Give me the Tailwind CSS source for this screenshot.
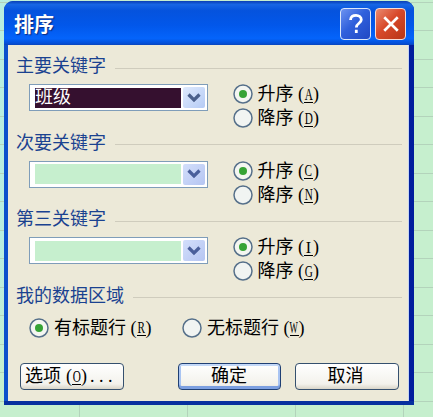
<!DOCTYPE html>
<html lang="zh-CN">
<head>
    <meta charset="UTF-8">
    <meta name="viewport" content="width=device-width, initial-scale=1.0">
    <title>排序</title>
    <script src="https://cdn.jsdelivr.net/npm/@tailwindcss/browser@4"></script>
</head>
<body class="w-[433px] h-[417px] overflow-hidden bg-[#c6efce] font-['Liberation_Serif','Noto_Sans_CJK_SC',sans-serif] text-[18px] text-black">

    <!-- Spreadsheet cells behind the dialog -->
    <div class="relative w-[433px] h-[417px] overflow-hidden pl-[4px] pt-[1px] bg-[linear-gradient(to_bottom,#c6efce00_60%,#c6efce_90%),linear-gradient(to_right,#b8eee0_0px,#c6efce_60px)]">
        <svg class="absolute inset-0" width="433" height="417" stroke="#b3d3bb" stroke-width="1" fill="none">
            <path d="M0 2.5H433M0 30.5H433M0 59.5H433M0 87.5H433M0 116.5H433M0 144.5H433M0 173.5H433M0 201.5H433M0 230.5H433M0 258.5H433M0 287.5H433M0 315.5H433M0 344.5H433M0 372.5H433M0 401.5H433"/>
            <path d="M79.5 400V417M187.5 400V417M295.5 400V417M403.5 400V417"/>
        </svg>

        <!-- Dialog -->
        <div class="relative w-[410px] h-[404px] rounded-t-[9px] overflow-hidden border-b-[4px] border-[#06309f] bg-[linear-gradient(to_right,#0b50cc,#0b4fd0_50%,#001d9c)] flex flex-col">
            <div class="h-[44px] shrink-0 flex items-center pl-[10px] pr-[8px] pt-[3px] bg-[linear-gradient(to_bottom,#0a3fb5_0%,#1766e4_8%,#0553dd_22%,#0257ea_55%,#0464fb_85%,#0350d8_96%,#0a45bb_100%)]">
                <h1 class="flex-1 text-[20px] leading-[24px] font-bold text-white [text-shadow:1px_1px_1px_#0a2a80]">排序</h1>
                <div class="flex gap-[4px] pb-px">
                    <button class="w-[31px] h-[32px] rounded-[4px] border-[1.5px] border-[#dce8fb] bg-[linear-gradient(135deg,#6d93f0,#3060dc_45%,#2148c4)] flex items-center justify-center">
                        <svg width="20" height="24" viewBox="0 0 20 24" fill="none" stroke="#fff" stroke-width="2.8"><path d="M4.5 8C4.5 4.5 7 3.3 10 3.3S15.3 5 15.3 7.8C15.3 11.3 10.3 11.3 10.3 15.5M10.3 17.8V21"/></svg>
                    </button>
                    <button class="w-[31px] h-[32px] rounded-[4px] border-[1.5px] border-[#f6ddd6] bg-[linear-gradient(135deg,#e98a70,#d8492a_45%,#b83616)] flex items-center justify-center">
                        <svg width="18" height="18" viewBox="0 0 20 20" fill="none" stroke="#fff" stroke-width="3"><path d="M2.5 2.5L17.5 17.5M17.5 2.5L2.5 17.5"/></svg>
                    </button>
                </div>
            </div>

            <div class="ml-[4px] mr-[5px] h-[356px] bg-[#ece9d8] border-r border-[#c5d4f2] pt-[9px]">

                <!-- Primary key -->
                <section class="h-[76.5px]">
                    <div class="flex items-center h-[22px] pl-[8px] pr-[6px]">
                        <h2 class="w-[99px] pt-[2px] leading-[22px] text-[#1a4290] whitespace-nowrap">主要关键字</h2>
                        <hr class="flex-1 mt-[6px] border-0 h-px bg-[#cfccbd]">
                    </div>
                    <div class="flex pt-[6px] pl-[21px]">
                        <div class="mt-[2px] w-[179px] h-[27px] border border-[#7f9db9] bg-white flex items-center pl-[5px] pr-[2px] gap-[2px]">
                            <div class="w-[146px] h-[20px] bg-[#35102f] text-white leading-[19px] overflow-hidden">班级</div>
                            <div class="w-[22px] h-[21px] rounded-[2px] bg-[linear-gradient(135deg,#dfeafd,#b5cbf5)] flex items-center justify-center">
                                <svg width="14" height="10" viewBox="0 0 14 10" fill="none" stroke="#4a5f8b" stroke-width="3.2"><path d="M1.5 1.5L7 7L12.5 1.5"/></svg>
                            </div>
                        </div>
                        <div class="ml-[25px]">
                            <label class="flex items-center h-[24px]">
                                <svg width="20" height="20" viewBox="0 0 20 20"><circle cx="10" cy="10" r="9" fill="#f4f6f1" stroke="#56708a" stroke-width="1.5"/><circle cx="10" cy="10" r="4" fill="#36a335"/></svg>
                                <span class="ml-[4.5px] leading-[24px]">升序</span>
                                <span class="ml-[4.5px] inline-flex items-center leading-[24px]">(<span class="w-[9px] h-[17px] flex justify-center text-[16px] leading-[17px] border-b border-black"><span class="scale-x-[0.7]">A</span></span>)</span>
                            </label>
                            <label class="flex items-center h-[24px]">
                                <svg width="20" height="20" viewBox="0 0 20 20"><circle cx="10" cy="10" r="9" fill="#f1f4f2" stroke="#56708a" stroke-width="1.5"/></svg>
                                <span class="ml-[4.5px] leading-[24px]">降序</span>
                                <span class="ml-[4.5px] inline-flex items-center leading-[24px]">(<span class="w-[9px] h-[17px] flex justify-center text-[16px] leading-[17px] border-b border-black"><span class="scale-x-[0.7]">D</span></span>)</span>
                            </label>
                        </div>
                    </div>
                </section>

                <!-- Secondary key -->
                <section class="h-[76.5px]">
                    <div class="flex items-center h-[22px] pl-[8px] pr-[6px]">
                        <h2 class="w-[99px] pt-[2px] leading-[22px] text-[#1a4290] whitespace-nowrap">次要关键字</h2>
                        <hr class="flex-1 mt-[6px] border-0 h-px bg-[#cfccbd]">
                    </div>
                    <div class="flex pt-[6px] pl-[21px]">
                        <div class="mt-[2px] w-[179px] h-[27px] border border-[#7f9db9] bg-white flex items-center pl-[5px] pr-[2px] gap-[2px]">
                            <div class="w-[146px] h-[20px] bg-[#c6efce]"></div>
                            <div class="w-[22px] h-[21px] rounded-[2px] bg-[linear-gradient(135deg,#d3dffb,#b5c5f2)] flex items-center justify-center">
                                <svg width="14" height="10" viewBox="0 0 14 10" fill="none" stroke="#4a5f9b" stroke-width="3.2"><path d="M1.5 1.5L7 7L12.5 1.5"/></svg>
                            </div>
                        </div>
                        <div class="ml-[25px]">
                            <label class="flex items-center h-[24px]">
                                <svg width="20" height="20" viewBox="0 0 20 20"><circle cx="10" cy="10" r="9" fill="#f4f6f1" stroke="#56708a" stroke-width="1.5"/><circle cx="10" cy="10" r="4" fill="#36a335"/></svg>
                                <span class="ml-[4.5px] leading-[24px]">升序</span>
                                <span class="ml-[4.5px] inline-flex items-center leading-[24px]">(<span class="w-[9px] h-[17px] flex justify-center text-[16px] leading-[17px] border-b border-black"><span class="scale-x-[0.7]">C</span></span>)</span>
                            </label>
                            <label class="flex items-center h-[24px]">
                                <svg width="20" height="20" viewBox="0 0 20 20"><circle cx="10" cy="10" r="9" fill="#f1f4f2" stroke="#56708a" stroke-width="1.5"/></svg>
                                <span class="ml-[4.5px] leading-[24px]">降序</span>
                                <span class="ml-[4.5px] inline-flex items-center leading-[24px]">(<span class="w-[9px] h-[17px] flex justify-center text-[16px] leading-[17px] border-b border-black"><span class="scale-x-[0.7]">N</span></span>)</span>
                            </label>
                        </div>
                    </div>
                </section>

                <!-- Third key -->
                <section class="h-[76.5px]">
                    <div class="flex items-center h-[22px] pl-[8px] pr-[6px]">
                        <h2 class="w-[99px] pt-[2px] leading-[22px] text-[#1a4290] whitespace-nowrap">第三关键字</h2>
                        <hr class="flex-1 mt-[6px] border-0 h-px bg-[#cfccbd]">
                    </div>
                    <div class="flex pt-[6px] pl-[21px]">
                        <div class="mt-[2px] w-[179px] h-[27px] border border-[#7f9db9] bg-white flex items-center pl-[5px] pr-[2px] gap-[2px]">
                            <div class="w-[146px] h-[20px] bg-[#c6efce]"></div>
                            <div class="w-[22px] h-[21px] rounded-[2px] bg-[linear-gradient(135deg,#d3dffb,#b5c5f2)] flex items-center justify-center">
                                <svg width="14" height="10" viewBox="0 0 14 10" fill="none" stroke="#4a5f9b" stroke-width="3.2"><path d="M1.5 1.5L7 7L12.5 1.5"/></svg>
                            </div>
                        </div>
                        <div class="ml-[25px]">
                            <label class="flex items-center h-[24px]">
                                <svg width="20" height="20" viewBox="0 0 20 20"><circle cx="10" cy="10" r="9" fill="#f4f6f1" stroke="#56708a" stroke-width="1.5"/><circle cx="10" cy="10" r="4" fill="#36a335"/></svg>
                                <span class="ml-[4.5px] leading-[24px]">升序</span>
                                <span class="ml-[4.5px] inline-flex items-center leading-[24px]">(<span class="w-[9px] h-[17px] flex justify-center text-[16px] leading-[17px] border-b border-black"><span>I</span></span>)</span>
                            </label>
                            <label class="flex items-center h-[24px]">
                                <svg width="20" height="20" viewBox="0 0 20 20"><circle cx="10" cy="10" r="9" fill="#f1f4f2" stroke="#56708a" stroke-width="1.5"/></svg>
                                <span class="ml-[4.5px] leading-[24px]">降序</span>
                                <span class="ml-[4.5px] inline-flex items-center leading-[24px]">(<span class="w-[9px] h-[17px] flex justify-center text-[16px] leading-[17px] border-b border-black"><span class="scale-x-[0.7]">G</span></span>)</span>
                            </label>
                        </div>
                    </div>
                </section>

                <!-- Data range -->
                <section class="h-[79.5px]">
                    <div class="flex items-center h-[22px] pl-[8px] pr-[6px]">
                        <h2 class="w-[117px] pt-[2px] leading-[22px] text-[#1a4290] whitespace-nowrap">我的数据区域</h2>
                        <hr class="flex-1 mt-[6px] border-0 h-px bg-[#cfccbd]">
                    </div>
                    <div class="flex pt-[10px] pl-[21px]">
                        <label class="flex items-center h-[24px] w-[153px]">
                            <svg width="20" height="20" viewBox="0 0 20 20"><circle cx="10" cy="10" r="9" fill="#f4f6f1" stroke="#56708a" stroke-width="1.5"/><circle cx="10" cy="10" r="4" fill="#36a335"/></svg>
                            <span class="ml-[5px] leading-[24px]">有标题行</span>
                            <span class="ml-[4.5px] inline-flex items-center leading-[24px]">(<span class="w-[9px] h-[17px] flex justify-center text-[16px] leading-[17px] border-b border-black"><span class="scale-x-[0.7]">R</span></span>)</span>
                        </label>
                        <label class="flex items-center h-[24px]">
                            <svg width="20" height="20" viewBox="0 0 20 20"><circle cx="10" cy="10" r="9" fill="#f1f4f2" stroke="#56708a" stroke-width="1.5"/></svg>
                            <span class="ml-[5px] leading-[24px]">无标题行</span>
                            <span class="ml-[4.5px] inline-flex items-center leading-[24px]">(<span class="w-[9px] h-[17px] flex justify-center text-[16px] leading-[17px] border-b border-black"><span class="scale-x-[0.55]">W</span></span>)</span>
                        </label>
                    </div>
                </section>

                <div class="flex pl-[12px]">
                    <button class="w-[104px] h-[27px] rounded-[4px] border-[1.5px] border-[#35506e] bg-[linear-gradient(to_bottom,#ffffff,#f3f2ec_80%,#d9d5c8)] flex items-center pl-[4px]">
                        <span>选项</span><span class="ml-[5px] inline-flex items-center">(<span class="w-[9px] h-[17px] flex justify-center text-[16px] leading-[17px] border-b border-black"><span class="scale-x-[0.7]">O</span></span>)</span><span class="tracking-[4.5px] ml-[3px]">...</span>
                    </button>
                    <button class="ml-[54px] w-[103px] h-[27px] rounded-[4px] border-[1.5px] border-[#1f3f73] bg-[linear-gradient(to_bottom,#ffffff,#f3f2ec_80%,#e4e2da)] shadow-[inset_0_2px_0_#c3d8f8,inset_0_-3px_0_#7c9fe0,inset_2px_0_0_#a9c4f2,inset_-2px_0_0_#a9c4f2] flex items-center justify-center pr-px">确定</button>
                    <button class="ml-[14px] w-[104px] h-[27px] rounded-[4px] border-[1.5px] border-[#35506e] bg-[linear-gradient(to_bottom,#ffffff,#f3f2ec_80%,#d9d5c8)] flex items-center justify-center pr-[3px]">取消</button>
                </div>
            </div>
        </div>
    </div>
</body>
</html>
